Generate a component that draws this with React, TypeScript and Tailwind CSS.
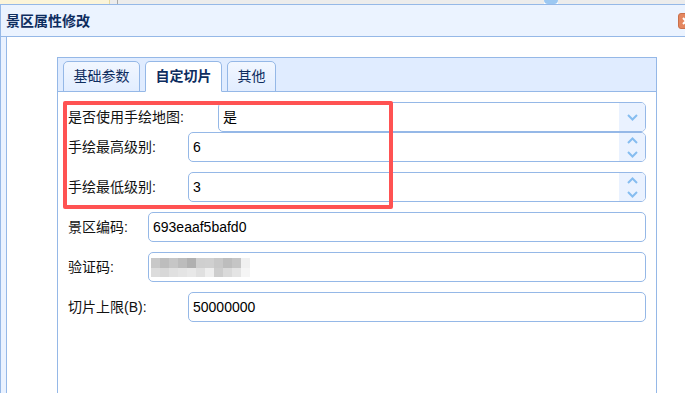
import React from "react";

const blur1 = ["#c8c8c8", "#bdbdbd", "#c6c6c6", "#bcbcbc", "#b0b0b0", "#cfcfcf", "#d0d0d0", "#c8c8c8", "#bdbdbd", "#c5c5c5", "#f0f0f0"];
const blur2 = ["#dcdcdc", "#d8d8d8", "#e0e0e0", "#e4e4e4", "#e8e8e8", "#e0e0e0", "#eeeeee", "#cdcdcd", "#dadada", "#e4e4e4", "#f5f5f5"];

function Chevron({ up }: { up?: boolean }) {
  return (
    <svg width="11" height="7" viewBox="0 0 11 7" className="block">
      <path
        d={up ? "M1 6 L5.5 1.5 L10 6" : "M1 1 L5.5 5.5 L10 1"}
        fill="none"
        stroke="#86bdf0"
        strokeWidth="2"
      />
    </svg>
  );
}

function Field({
  label,
  labelW,
  value,
  kind,
  children,
}: {
  label: string;
  labelW: string;
  value?: string;
  kind?: "combo" | "spin";
  children?: React.ReactNode;
}) {
  return (
    <div className="flex items-center h-[30px]">
      <div className={`${labelW} shrink-0 text-[14px] text-[#111] leading-[30px] whitespace-nowrap`}>{label}</div>
      <div className="flex-1 h-[30px] flex border border-[#95b8e7] rounded-[5px] bg-white overflow-hidden">
        <div className="flex-1 flex items-center pl-[4px] text-[14px] text-black">
          {value}
          {children}
        </div>
        {kind === "combo" && (
          <div className="w-[26px] bg-[#eaf2ff] flex items-center justify-center">
            <Chevron />
          </div>
        )}
        {kind === "spin" && (
          <div className="w-[26px] bg-[#eaf2ff] flex flex-col items-center justify-center gap-[7px]">
            <Chevron up />
            <Chevron />
          </div>
        )}
      </div>
    </div>
  );
}

export default function App() {
  return (
    <div className="relative w-[685px] h-[393px] overflow-hidden bg-white font-['Liberation_Sans','Noto_Sans_CJK_SC',sans-serif]">
      {/* background strip behind the dialog */}
      <div className="flex h-[4px]">
        <div className="w-[110px] bg-[#fbf4d9] border-r border-[#e8d9a0]"></div>
        <div className="w-[8px] bg-[#ececec] border-r border-[#a8a8a8]"></div>
        <div className="w-[426px] bg-[#ececec]"></div>
        <div className="w-[14px] bg-[#9cc8f2] rounded-b-[4px]"></div>
        <div className="flex-1 bg-[#ececec]"></div>
      </div>

      {/* dialog window */}
      <div className="w-[720px] h-[389px] flex flex-col bg-[#eaf2ff] border-l border-t border-[#95b8e7]">
        <div className="h-[32px] shrink-0 flex items-center justify-between border-b border-[#95b8e7] bg-[#ebf3ff] pl-[5px]">
          <span className="text-[14px] font-bold text-[#0e2d5f] leading-none">景区属性修改</span>
          <div className="mr-[26px] w-[16px] h-[16px] rounded-[3px] bg-[#e4865f] border border-[#c9704b] flex items-center justify-center">
            <svg width="8" height="8" viewBox="0 0 8 8">
              <path d="M1 1 L7 7 M7 1 L1 7" stroke="#fff" strokeWidth="2" />
            </svg>
          </div>
        </div>

        <div className="flex-1 ml-[5px] mr-[5px] bg-white border-l border-r border-[#95b8e7] pl-[50px] pt-[20px]">
          <div className="w-[600px] h-full flex flex-col border-l border-r border-t border-[#95b8e7]">
            {/* tab headers */}
            <div className="h-[34px] shrink-0 flex items-end gap-[5px] pl-[5px] bg-[#e0ecff] border-b border-[#95b8e7]">
              <div className="w-[77px] h-[31px] -mb-px flex items-center justify-center rounded-t-[5px] border border-[#95b8e7] bg-gradient-to-b from-[#f2f7ff] to-[#e2edff] text-[14px] text-[#0e2d5f]">
                基础参数
              </div>
              <div className="w-[77px] h-[31px] -mb-px flex items-center justify-center rounded-t-[5px] border border-[#95b8e7] border-b-white bg-white text-[14px] font-bold text-[#0e2d5f]">
                自定切片
              </div>
              <div className="w-[49px] h-[31px] -mb-px flex items-center justify-center rounded-t-[5px] border border-[#95b8e7] bg-gradient-to-b from-[#f2f7ff] to-[#e2edff] text-[14px] text-[#0e2d5f]">
                其他
              </div>
            </div>

            {/* tab panel */}
            <div className="flex-1 flex flex-col pl-[10px] pr-[10px] pt-[10px]">
              <Field label="是否使用手绘地图:" labelW="w-[150px]" value="是" kind="combo" />
              <Field label="手绘最高级别:" labelW="w-[120px]" value="6" kind="spin" />
              <div className="h-[10px]"></div>
              <Field label="手绘最低级别:" labelW="w-[120px]" value="3" kind="spin" />
              <div className="h-[10px]"></div>
              <Field label="景区编码:" labelW="w-[80px]" value="693eaaf5bafd0" />
              <div className="h-[10px]"></div>
              <Field label="验证码:" labelW="w-[80px]">
                <div className="flex flex-col blur-[0.6px] -ml-[2px]">
                  <div className="flex">
                    {blur1.map((c, i) => (
                      <div key={i} className="w-[9px] h-[10px]" style={{ backgroundColor: c }}></div>
                    ))}
                  </div>
                  <div className="flex">
                    {blur2.map((c, i) => (
                      <div key={i} className="w-[9px] h-[9px]" style={{ backgroundColor: c }}></div>
                    ))}
                  </div>
                </div>
              </Field>
              <div className="h-[10px]"></div>
              <Field label="切片上限(B):" labelW="w-[120px]" value="50000000" />
            </div>
          </div>
        </div>
      </div>

      {/* red annotation box */}
      <div className="absolute left-[63px] top-[101px] w-[330px] h-[108px] border-[4px] border-[#ff5252] rounded-[2px] pointer-events-none"></div>
    </div>
  );
}
